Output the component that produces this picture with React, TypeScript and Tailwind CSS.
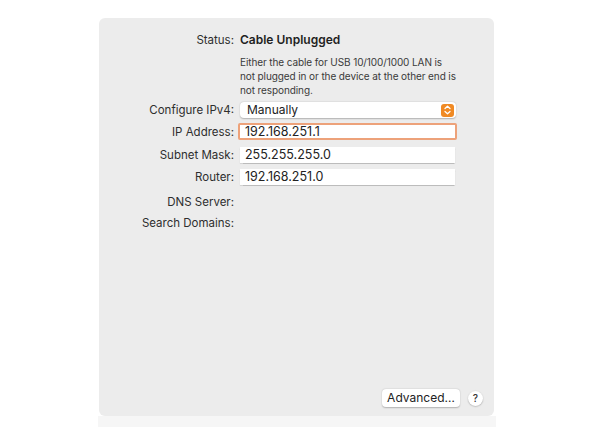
import React from "react";

const Label = ({ children }: { children: React.ReactNode }) => (
  <div className="w-[136px] shrink-0 text-right pr-[1px] text-[11.5px] text-[#2e2e2e] leading-[16px]">{children}</div>
);

export default function App() {
  return (
    <div className="w-[592px] h-[444px] bg-white pt-[18px] pl-[99px]" style={{ fontFamily: "Inter, 'Liberation Sans', sans-serif" }}>
      <div className="w-[395px] h-[398px] bg-[#ececec] rounded-[6px] flex flex-col pt-[14px]">
        <div className="flex items-center gap-[5px] h-[16px]">
          <Label>Status:</Label>
          <div className="text-[12px] font-semibold text-[#1f1f1f] leading-[16px]">Cable Unplugged</div>
        </div>
        <div className="flex gap-[5px] mt-[7px]">
          <div className="w-[136px] shrink-0" />
          <div className="whitespace-nowrap text-[10px] leading-[14px] text-[#3a3a3a] tracking-[-0.1px]">
            Either the cable for USB 10/100/1000 LAN is
            <br />
            not plugged in or the device at the other end is
            <br />
            not responding.
          </div>
        </div>
        <div className="flex items-center gap-[5px] mt-[5px] h-[16px]">
          <Label>Configure IPv4:</Label>
          <div className="w-[216px] h-[16px] bg-white rounded-[4px] shadow-[0_0.5px_1.5px_rgba(0,0,0,0.25)] flex items-center justify-between pl-[7px] pr-[2px]">
            <span className="text-[12px] text-[#222] leading-[16px]">Manually</span>
            <div className="w-[13px] h-[13px] rounded-[3px] bg-[#f08a24] flex items-center justify-center">
              <svg width="7" height="10" viewBox="0 0 7 10" fill="none" stroke="white" strokeWidth="1.3" strokeLinecap="round" strokeLinejoin="round">
                <path d="M1 3.5 L3.5 1.2 L6 3.5" />
                <path d="M1 6.5 L3.5 8.8 L6 6.5" />
              </svg>
            </div>
          </div>
        </div>
        <div className="flex items-center gap-[5px] mt-[5px] h-[17px]">
          <Label>IP Address:</Label>
          <div className="w-[219px] h-[17px] -ml-[2px] bg-white border-[2px] border-[#eda27a] rounded-[2px] flex items-center pl-[5px]">
            <span className="text-[12.5px] text-[#222] leading-[14px]">192.168.251.1</span>
          </div>
        </div>
        <div className="flex items-center gap-[5px] mt-[7px] h-[16px]">
          <Label>Subnet Mask:</Label>
          <div className="w-[215px] h-[16px] bg-white shadow-[0_0.5px_1px_rgba(0,0,0,0.2)] flex items-center pl-[5px]">
            <span className="text-[12.5px] text-[#222] leading-[14px]">255.255.255.0</span>
          </div>
        </div>
        <div className="flex items-center gap-[5px] mt-[6px] h-[16px]">
          <Label>Router:</Label>
          <div className="w-[215px] h-[16px] bg-white shadow-[0_0.5px_1px_rgba(0,0,0,0.2)] flex items-center pl-[5px]">
            <span className="text-[12.5px] text-[#222] leading-[14px]">192.168.251.0</span>
          </div>
        </div>
        <div className="flex items-center gap-[5px] mt-[9px] h-[16px]">
          <Label>DNS Server:</Label>
        </div>
        <div className="flex items-center gap-[5px] mt-[5px] h-[16px]">
          <Label>Search Domains:</Label>
        </div>
        <div className="flex-1" />
        <div className="flex items-center justify-end gap-[8px] pr-[11px] pb-[9px]">
          <div className="w-[78px] h-[18px] bg-white rounded-[4px] shadow-[0_0.5px_1.5px_rgba(0,0,0,0.25)] flex items-center justify-center text-[12px] text-[#222]">
            Advanced…
          </div>
          <div className="w-[15px] h-[15px] rounded-full bg-white shadow-[0_0.5px_1.5px_rgba(0,0,0,0.3)] flex items-center justify-center text-[10px] text-[#333] font-medium">
            ?
          </div>
        </div>
      </div>
      <div className="w-[398px] h-[11px] bg-[#f6f6f6] -ml-[1px]" />
    </div>
  );
}
